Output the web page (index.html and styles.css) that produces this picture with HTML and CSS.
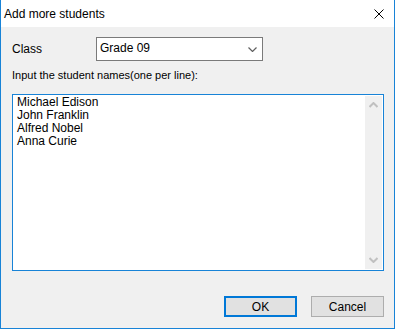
FILE: index.html
```html
<!DOCTYPE html>
<html lang="en">
<head>
  <meta charset="UTF-8" />
  <title>Add more students</title>
  <link rel="stylesheet" href="styles.css">
</head>
<body>
<div class="dialog">
  <div class="titlebar">
    <span class="title">Add more students</span>
    <svg class="close" width="10" height="10" viewBox="0 0 10 10">
      <path d="M0.5 0.5 L9.5 9.5 M9.5 0.5 L0.5 9.5" stroke="#000" stroke-width="1" fill="none"/>
    </svg>
  </div>
  <div class="content">
    <div class="class-row">
      <label class="class-label">Class</label>
      <div class="combo">
        <span>Grade 09</span>
        <svg class="chevron" width="9" height="5" viewBox="0 0 9 5">
          <path d="M0.5 0.5 L4.5 4.5 L8.5 0.5" stroke="#606060" stroke-width="1.2" fill="none"/>
        </svg>
      </div>
    </div>
    <p class="hint">Input the student names(one per line):</p>
    <div class="names">
      <div class="names-text">
        <div>Michael Edison</div>
        <div>John Franklin</div>
        <div>Alfred Nobel</div>
        <div>Anna Curie</div>
      </div>
      <div class="scrollbar">
        <svg width="9" height="6" viewBox="0 0 9 6">
          <path d="M0.5 5 L4.5 1 L8.5 5" stroke="#c0c0c0" stroke-width="2" fill="none"/>
        </svg>
        <svg width="9" height="6" viewBox="0 0 9 6">
          <path d="M0.5 1 L4.5 5 L8.5 1" stroke="#c0c0c0" stroke-width="2" fill="none"/>
        </svg>
      </div>
    </div>
    <div class="buttons">
      <button class="btn btn-default">OK</button>
      <button class="btn">Cancel</button>
    </div>
  </div>
</div>
</body>
</html>
```

FILE: styles.css
```css
body {
  margin: 0;
  font-family: 'Liberation Sans', Arial, sans-serif;
  font-size: 12px;
  color: #000;
}

.dialog {
  width: 395px;
  height: 329px;
  box-sizing: border-box;
  border: 1px solid #1883d7;
  border-top: none;
  display: flex;
  flex-direction: column;
  background-color: #f0f0f0;
}

.titlebar {
  height: 27px;
  background-color: #fff;
  display: flex;
  align-items: center;
  justify-content: space-between;
  padding: 0 10px 0 3px;
}

.title {
  font-size: 12px;
  line-height: 16px;
}

.content {
  flex: 1;
  padding: 10px 10px 0 11px;
}

.class-row {
  display: flex;
  align-items: center;
  height: 24px;
}

.class-label {
  width: 84px;
}

.combo {
  width: 167px;
  height: 24px;
  box-sizing: border-box;
  border: 1px solid #7a7a7a;
  background-color: #fff;
  display: flex;
  align-items: center;
  justify-content: space-between;
  padding: 0 5px 2px 3px;
}

.chevron {
  margin-top: 3px;
}

.hint {
  margin: 6px 0 0;
  font-size: 11px;
  line-height: 16px;
}

.names {
  margin-top: 11px;
  width: 372px;
  height: 177px;
  box-sizing: border-box;
  border: 1px solid #1883d7;
  background-color: #fff;
  display: flex;
}

.names-text {
  flex: 1;
  padding: 1px 4px;
  line-height: 13px;
}

.scrollbar {
  width: 17px;
  margin: 1px 1px 1px 0;
  background-color: #f0f0f0;
  display: flex;
  flex-direction: column;
  justify-content: space-between;
  align-items: center;
  padding: 6px 0;
}

.buttons {
  margin-top: 25px;
  display: flex;
  justify-content: flex-end;
  gap: 14px;
  width: 372px;
}

.btn {
  width: 73px;
  height: 21px;
  box-sizing: border-box;
  border: 1px solid #adadad;
  background-color: #e1e1e1;
  font-family: inherit;
  font-size: 12px;
  padding: 0;
}

.btn-default {
  border: 2px solid #0078d7;
}
```
